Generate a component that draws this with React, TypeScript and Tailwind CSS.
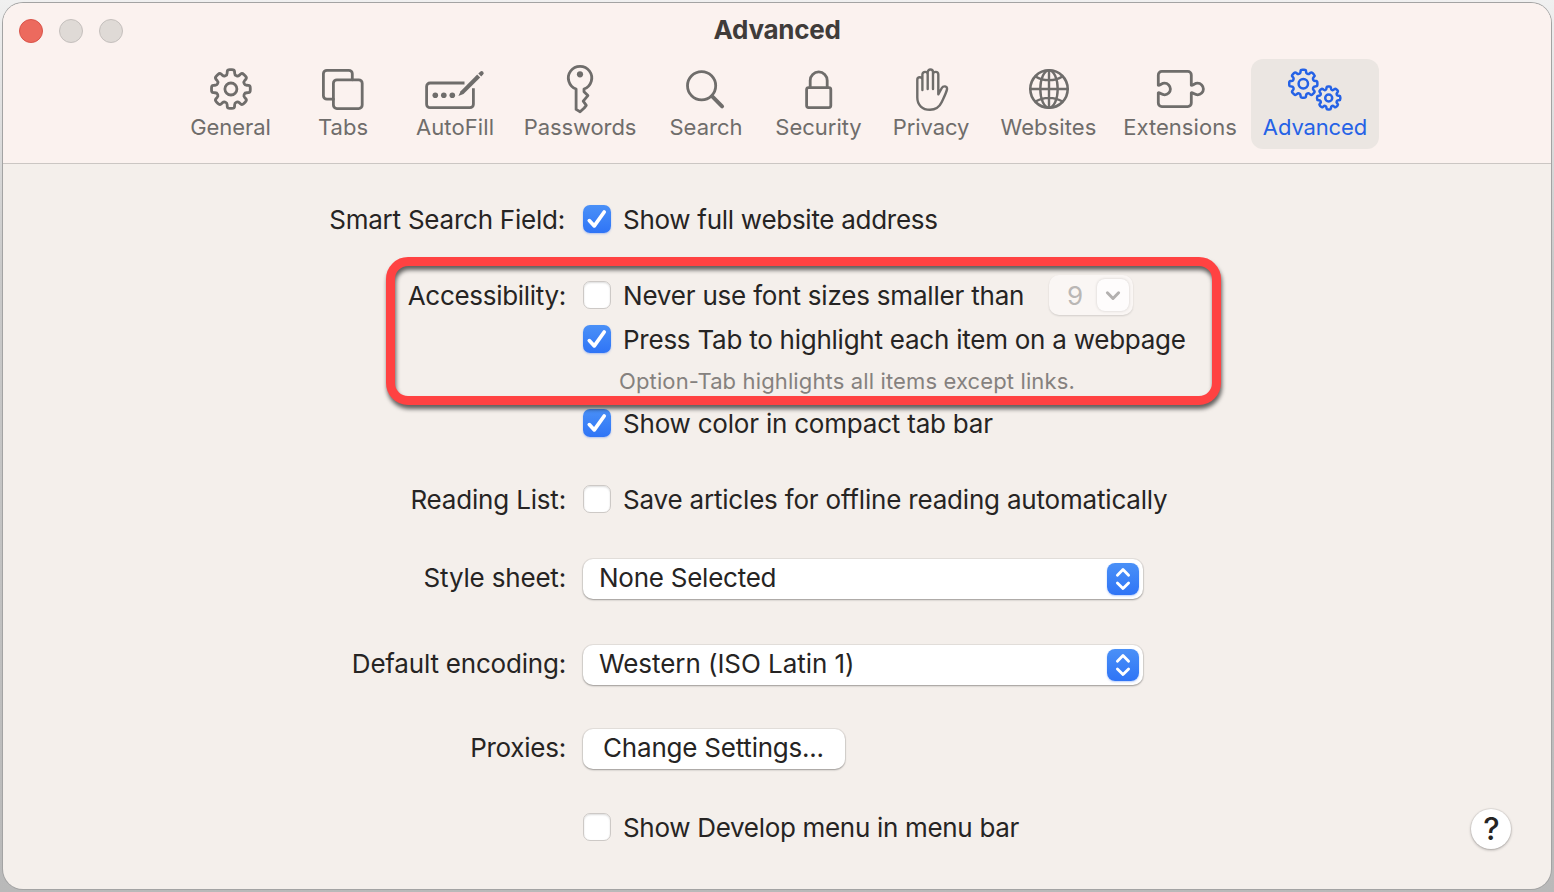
import type { ReactNode } from "react";

function gearPath(cx: number, cy: number, R: number, r: number): string {
  const teeth = 8;
  const pts: [number, number][] = [];
  for (let i = 0; i < teeth; i++) {
    const a = (i * 2 * Math.PI) / teeth - Math.PI / 2;
    const add = (rad: number, d: number) =>
      pts.push([cx + rad * Math.cos(a + d), cy + rad * Math.sin(a + d)]);
    add(r, -0.27);
    add(R, -0.18);
    add(R, 0.18);
    add(r, 0.27);
  }
  const n = pts.length;
  const mix = (p: [number, number], q: [number, number], t: number) =>
    `${(p[0] + (q[0] - p[0]) * t).toFixed(2)} ${(p[1] + (q[1] - p[1]) * t).toFixed(2)}`;
  let d = "";
  for (let i = 0; i < n; i++) {
    const prev = pts[(i + n - 1) % n];
    const p = pts[i];
    const next = pts[(i + 1) % n];
    d += `${i === 0 ? "M" : "L"}${mix(p, prev, 0.35)} Q${p[0].toFixed(2)} ${p[1].toFixed(2)} ${mix(p, next, 0.35)} `;
  }
  return d + "Z";
}

function Icon({ children, sw = "2.8" }: { children: ReactNode; sw?: string }) {
  return (
    <svg
      width="60"
      height="52"
      viewBox="0 0 60 52"
      fill="none"
      stroke="currentColor"
      strokeWidth={sw}
      strokeLinecap="round"
      strokeLinejoin="round"
      className="block shrink-0 overflow-visible"
    >
      {children}
    </svg>
  );
}

const tabs: { label: string; width: string; track: string; icon: ReactNode }[] = [
  {
    label: "General",
    width: "w-[113px]",
    track: "tracking-[-0.05px]",
    icon: (
      <Icon>
        <path d={gearPath(29.9, 26, 19.7, 14.5)} />
        <circle cx="29.9" cy="26" r="6" />
      </Icon>
    ),
  },
  {
    label: "Tabs",
    width: "w-[112px]",
    track: "tracking-[0px]",
    icon: (
      <Icon>
        <rect x="20.4" y="16.8" width="28.8" height="28.8" rx="3.5" />
        <path d="M20.4 36.2H13.9a3.5 3.5 0 0 1-3.5-3.5V10.8a3.5 3.5 0 0 1 3.5-3.5H35.8a3.5 3.5 0 0 1 3.5 3.5V16.8" />
      </Icon>
    ),
  },
  {
    label: "AutoFill",
    width: "w-[112px]",
    track: "tracking-[0.1px]",
    icon: (
      <Icon>
        <path
          strokeLinecap="butt"
          d="M39.5 20H5.1a3.5 3.5 0 0 0-3.5 3.5V41.2a3.5 3.5 0 0 0 3.5 3.5H44.9a3.5 3.5 0 0 0 3.5-3.5V25.2"
        />
        <g fill="currentColor" stroke="none">
          <circle cx="10.3" cy="32.3" r="2.8" />
          <circle cx="18.8" cy="32.3" r="2.8" />
          <circle cx="27.3" cy="32.3" r="2.8" />
          <path d="M33.4 33.1L35.6 28.2L52.2 11.6L55.2 14.6L38.5 30.9Z" />
          <path d="M53.3 10.6L55.2 8.7a1.9 1.9 0 0 1 2.9 2.9L56.2 13.5Z" />
        </g>
      </Icon>
    ),
  },
  {
    label: "Passwords",
    width: "w-[138px]",
    track: "tracking-[-0.1px]",
    icon: (
      <Icon>
        <path d="M26.1 26V46.4L30.1 48.8L34.2 45L36.3 42.4L33.2 38.2L37.9 32.6L34 28.7V26A11.7 11.7 0 1 0 26.1 26Z" />
        <circle cx="30" cy="11.3" r="3.1" fill="currentColor" stroke="none" />
      </Icon>
    ),
  },
  {
    label: "Search",
    width: "w-[114px]",
    track: "tracking-[0px]",
    icon: (
      <Icon>
        <circle cx="25.6" cy="22.7" r="14.1" />
        <path strokeWidth="3.9" d="M36.2 33.3L46.1 43.4" />
      </Icon>
    ),
  },
  {
    label: "Security",
    width: "w-[111px]",
    track: "tracking-[0px]",
    icon: (
      <Icon>
        <rect x="17.6" y="24.6" width="24.2" height="20" rx="2" />
        <path d="M21.2 24V17.4a8.5 8.5 0 0 1 17 0V24" />
      </Icon>
    ),
  },
  {
    label: "Privacy",
    width: "w-[114px]",
    track: "tracking-[-0.1px]",
    icon: (
      <Icon sw="2.4">
        <path d="M21.4 27V11.5a2.65 2.65 0 0 1 5.3 0V26M26.7 11V9.2a2.65 2.65 0 0 1 5.3 0V26M32 11.5a2.65 2.65 0 0 1 5.3 0V31.3L40.8 25C42 22.8 46.7 22.4 46 26.4C45 30.5 42.8 34.6 40.5 39.6C38.2 44.4 34 46.8 29 46.8C21.5 46.8 16.3 42.2 16.3 34.5V16.8a2.55 2.55 0 0 1 5.1 0" />
      </Icon>
    ),
  },
  {
    label: "Websites",
    width: "w-[121px]",
    track: "tracking-[0.1px]",
    icon: (
      <Icon sw="2.4">
        <circle cx="30" cy="26" r="18.7" strokeWidth="2.6" />
        <ellipse cx="30" cy="26" rx="8.7" ry="18.7" />
        <path d="M30 7.2V44.8M11.2 26H48.8M16.6 13.4C24.2 18.4 35.8 18.4 43.4 13.4M16.6 38.6C24.2 33.6 35.8 33.6 43.4 38.6" />
      </Icon>
    ),
  },
  {
    label: "Extensions",
    width: "w-[142px]",
    track: "tracking-[0.05px]",
    icon: (
      <Icon>
        <path d="M8.3 22.2V11.9a3.5 3.5 0 0 1 3.5-3.5H37.8a3.5 3.5 0 0 1 3.5 3.5V22.2C43 22.6 44.4 20.2 47.6 20.2a5.8 5.8 0 0 1 0 11.6C44.4 31.8 43 29.4 41.3 29.8V40.1a3.5 3.5 0 0 1-3.5 3.5H11.8a3.5 3.5 0 0 1-3.5-3.5V29.8C10 29.4 11.4 31.8 14.6 31.8a5.8 5.8 0 0 0 0-11.6C11.4 20.2 10 22.6 8.3 22.2Z" />
      </Icon>
    ),
  },
  {
    label: "Advanced",
    width: "w-[128px]",
    track: "tracking-[-0.12px]",
    icon: (
      <Icon sw="2.5">
        <path d={gearPath(18.3, 20.7, 14.3, 10.8)} />
        <circle cx="18.3" cy="20.7" r="4.7" />
        <path d={gearPath(43.7, 35, 11.8, 8.8)} />
        <circle cx="43.7" cy="35" r="3.5" />
      </Icon>
    ),
  },
];

function Checkbox({ checked }: { checked?: boolean }) {
  return checked ? (
    <span className="block h-7 w-7 shrink-0 rounded-[7px] bg-linear-to-b from-[#4a90f7] to-[#2f74f6] shadow-[0_1px_2px_rgba(50,110,240,0.35)]">
      <svg width="28" height="28" viewBox="0 0 28 28" fill="none" stroke="#fff" strokeWidth="3.7" strokeLinecap="round" strokeLinejoin="round">
        <path d="M6.3 15.6L11.3 20.9L21.2 7" />
      </svg>
    </span>
  ) : (
    <span className="block h-7 w-7 shrink-0 rounded-[7px] border border-[#cdc9c6] bg-white shadow-[inset_0_1px_2px_rgba(0,0,0,0.14)]" />
  );
}

function Row({ label, className, labelClass = "", children }: { label?: string; className: string; labelClass?: string; children: ReactNode }) {
  return (
    <div className={"flex items-center " + className}>
      <div className={"mr-[17px] w-[563px] shrink-0 text-right " + labelClass}>{label}</div>
      {children}
    </div>
  );
}

function Popup({ text, track }: { text: string; track: string }) {
  return (
    <div className="flex h-10 w-[560px] items-center justify-between rounded-[10px] bg-white pr-1 pl-4 shadow-[0_0_0_1px_rgba(0,0,0,0.06),0_1px_2px_rgba(0,0,0,0.32)]">
      <span className={"-mt-0.5 " + track}>{text}</span>
      <span className="block h-8 w-8 rounded-[8px] bg-linear-to-b from-[#4a90f7] to-[#2f74f6] shadow-[0_1px_2px_rgba(50,110,240,0.35)]">
        <svg width="32" height="32" viewBox="0 0 32 32" fill="none" stroke="#fff" strokeWidth="2.8" strokeLinecap="round" strokeLinejoin="round">
          <path d="M10.4 12.3L16 6.6L21.6 12.3M10.4 19.9L16 25.6L21.6 19.9" />
        </svg>
      </span>
    </div>
  );
}

export default function App() {
  return (
    <div className="h-[892px] w-[1554px] overflow-hidden bg-linear-to-b from-[#f0f0f0] via-[#c9c9c9] via-30% to-[#b9b9b9] p-[3px] font-['Inter','Liberation_Sans',sans-serif]">
      <div className="relative flex h-[886px] w-[1548px] flex-col overflow-hidden rounded-[20px] bg-[#f4efeb] text-[26px] leading-7 whitespace-nowrap text-[#262423] shadow-[0_0_0_1px_#a3a3a3]">
        <header className="h-[161px] shrink-0 border-b border-[#cbc6c3] bg-[#fbf2ef]">
          <div className="flex h-14 items-center">
            <div className="flex w-[516px] gap-4 pl-4">
              <span className="h-6 w-6 rounded-full border border-[#d9544a] bg-[#ec6a5e]" />
              <span className="h-6 w-6 rounded-full border border-[#c4bfbc] bg-[#dfdad6]" />
              <span className="h-6 w-6 rounded-full border border-[#c4bfbc] bg-[#dfdad6]" />
            </div>
            <h1 className="-mt-0.5 w-[516px] text-center text-[26px] font-bold tracking-[-0.28px] text-[#403c3a]">Advanced</h1>
          </div>
          <nav className="flex pl-[171px]">
            {tabs.map((t) => (
              <button
                key={t.label}
                className={
                  "flex h-[90px] flex-col items-center rounded-xl pt-1 " +
                  t.width +
                  (t.label === "Advanced" ? " bg-[#ebe6e2] text-[#2562e6]" : " text-[#6f6d6b]")
                }
              >
                {t.icon}
                <span className={"-mt-px text-[22px] leading-[26px] " + t.track}>{t.label}</span>
              </button>
            ))}
          </nav>
        </header>

        <main>
          <Row label="Smart Search Field:" className="mt-[41px] h-7" labelClass="pt-0.5 pr-px tracking-[-0.23px]">
            <Checkbox checked />
            <span className="ml-3 pt-0.5 tracking-[-0.28px]">Show full website address</span>
          </Row>
          <Row label="Accessibility:" className="mt-12 h-7" labelClass="pt-0.5 tracking-[-0.3px]">
            <Checkbox />
            <span className="ml-3 w-[426px] pt-0.5 tracking-[-0.2px]">Never use font sizes smaller than</span>
            <span className="flex h-10 w-[84px] items-center justify-between rounded-[10px] bg-[#faf6f4] pr-1 pl-[18px] text-[#bab7b5] shadow-[0_1px_2px_rgba(0,0,0,0.14)]">
              <span className="pt-0.5">9</span>
              <span className="block h-8 w-8 rounded-[8px] bg-[#fefcfc] shadow-[0_0_3px_rgba(0,0,0,0.16)]">
                <svg width="32" height="32" viewBox="0 0 32 32" fill="none" stroke="#b3b0af" strokeWidth="3" strokeLinecap="round" strokeLinejoin="round">
                  <path d="M10.4 13.8L16 19.5L21.6 13.8" />
                </svg>
              </span>
            </span>
          </Row>
          <Row className="mt-4 h-7">
            <Checkbox checked />
            <span className="ml-3 pt-0.5 tracking-[-0.245px]">Press Tab to highlight each item on a webpage</span>
          </Row>
          <Row className="mt-[14px] h-7">
            <span className="ml-9 text-[22px] tracking-[0.13px] text-[#85817e]">Option-Tab highlights all items except links.</span>
          </Row>
          <Row className="mt-[14px] h-7">
            <Checkbox checked />
            <span className="ml-3 pt-0.5 tracking-[-0.21px]">Show color in compact tab bar</span>
          </Row>
          <Row label="Reading List:" className="mt-12 h-7" labelClass="pt-0.5 tracking-[-0.18px]">
            <Checkbox />
            <span className="ml-3 pt-0.5 tracking-[-0.19px]">Save articles for offline reading automatically</span>
          </Row>
          <Row label="Style sheet:" className="mt-[46px] h-10" labelClass="pb-0.5 tracking-[-0.18px]">
            <Popup text="None Selected" track="tracking-[-0.25px]" />
          </Row>
          <Row label="Default encoding:" className="mt-[46px] h-10" labelClass="pb-0.5 tracking-[-0.2px]">
            <Popup text="Western (ISO Latin 1)" track="tracking-[-0.06px]" />
          </Row>
          <Row label="Proxies:" className="mt-11 h-10" labelClass="pb-0.5 tracking-[-0.25px]">
            <button className="h-10 w-[262px] rounded-[10px] bg-white pb-0.5 pr-px tracking-[-0.22px] shadow-[0_0_0_1px_rgba(0,0,0,0.06),0_1px_2px_rgba(0,0,0,0.32)]">
              Change Settings...
            </button>
          </Row>
          <Row className="mt-11 h-7">
            <Checkbox />
            <span className="ml-3 pt-0.5 tracking-[-0.31px]">Show Develop menu in menu bar</span>
          </Row>
        </main>

        <button className="absolute right-10 bottom-10 h-10 w-10 rounded-full bg-white pl-px text-[31px] leading-10 font-medium shadow-[0_0_0_1px_rgba(0,0,0,0.05),0_1px_3px_rgba(0,0,0,0.3)]">
          ?
        </button>
        <div className="pointer-events-none absolute top-[254px] left-[383px] h-[148px] w-[835px] rounded-[22px] border-[9px] border-[#ff4242] drop-shadow-[1px_4px_2px_rgba(0,0,0,0.6)]" />
      </div>
    </div>
  );
}
